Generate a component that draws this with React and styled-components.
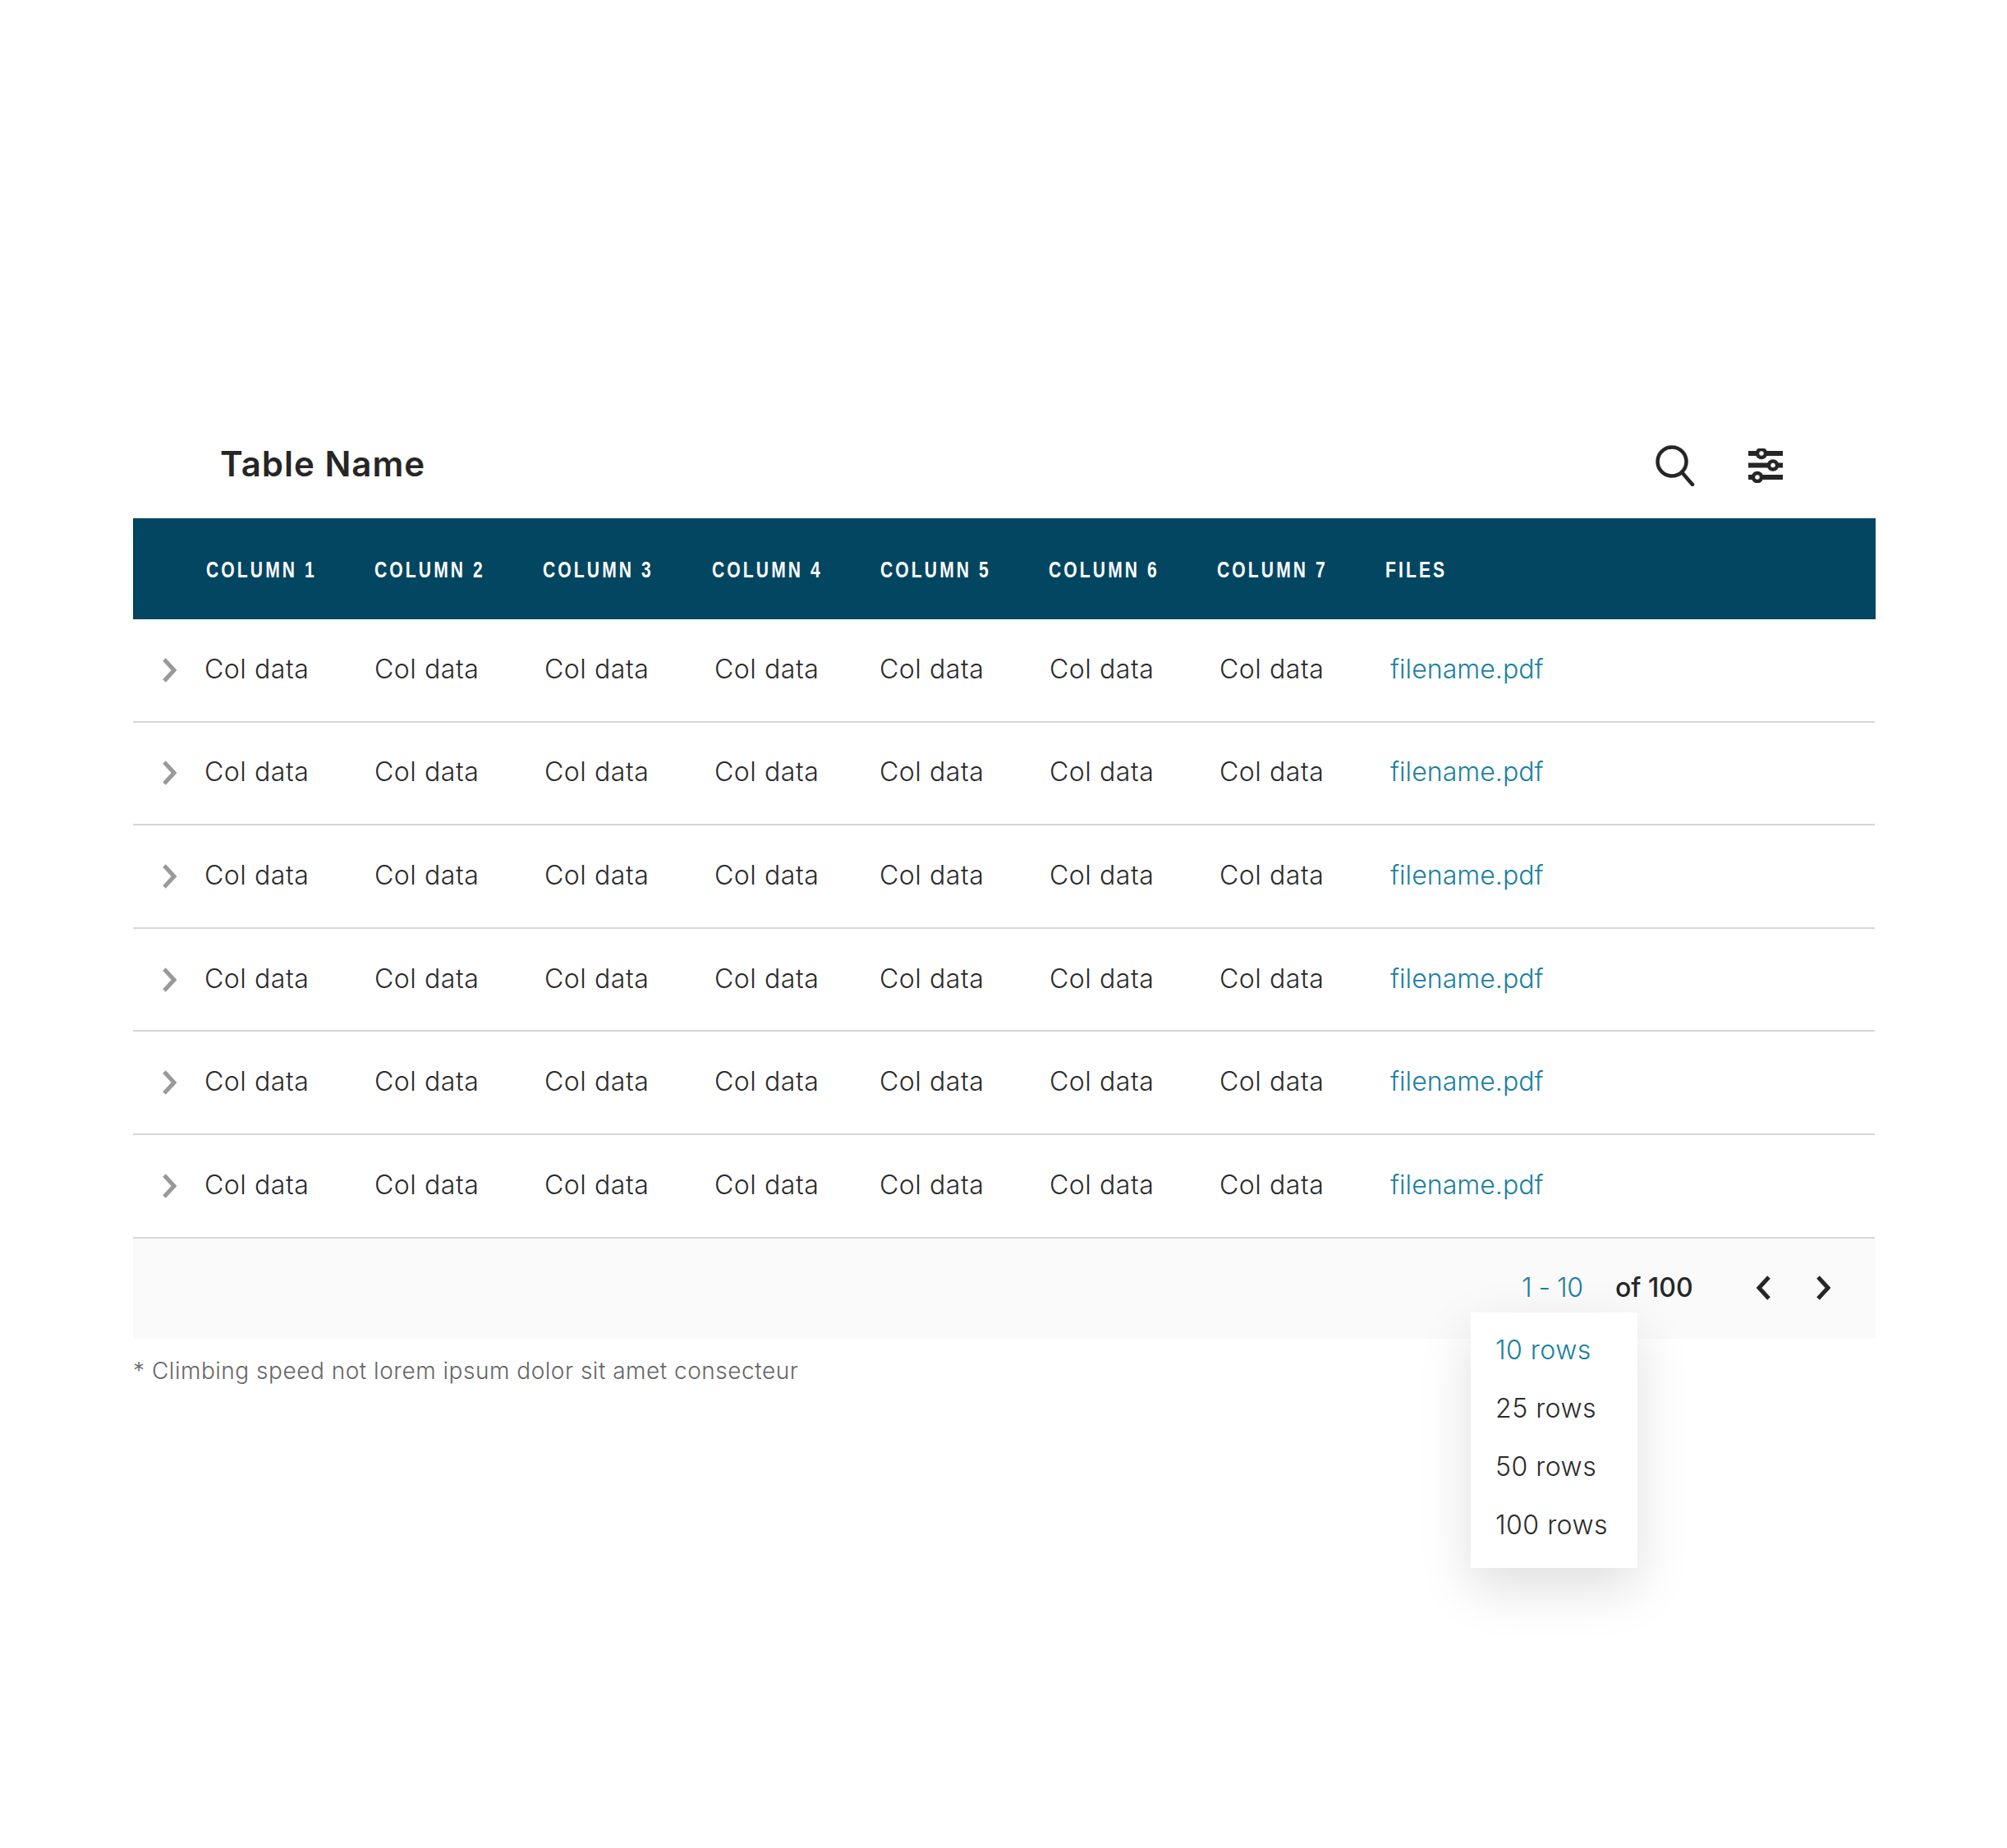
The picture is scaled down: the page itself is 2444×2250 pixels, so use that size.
import styled, { createGlobalStyle } from 'styled-components';

const COLUMNS = ['COLUMN 1', 'COLUMN 2', 'COLUMN 3', 'COLUMN 4', 'COLUMN 5', 'COLUMN 6', 'COLUMN 7', 'FILES'];
const ROWS = [1, 2, 3, 4, 5, 6];
const ROW_OPTIONS = ['10 rows', '25 rows', '50 rows', '100 rows'];

const GlobalStyle = createGlobalStyle`
  html, body {
    margin: 0;
    padding: 0;
    background: #fff;
    font-family: Inter, "Liberation Sans", sans-serif;
    color: #2b2b2b;
  }
`;

const Page = styled.div`
  width: 2444px;
  height: 2250px;
  box-sizing: border-box;
  padding: 510px 160px 0 162px;
`;

const Toolbar = styled.div`
  height: 121px;
  box-sizing: border-box;
  display: flex;
  align-items: center;
  padding: 0 113px 8px 106px;
`;

const Title = styled.h1`
  margin: 0 0 4px;
  flex: 1;
  font-size: 42px;
  font-weight: 600;
  letter-spacing: 1px;
  color: #262626;
`;

const Tools = styled.div`
  display: flex;
  align-items: center;
  gap: 65px;
`;

const Head = styled.div`
  height: 123px;
  box-sizing: border-box;
  background: #024661;
  display: grid;
  grid-template-columns: repeat(7, 205.2px) 1fr;
  align-items: center;
  padding: 4px 0 0 89px;
`;

const HeadCell = styled.div`
  font-family: "Liberation Sans", sans-serif;
  font-size: 27px;
  font-weight: 700;
  letter-spacing: 4px;
  color: #fff;
  white-space: nowrap;
  transform: scaleX(0.78);
  transform-origin: left center;
`;

const Row = styled.div`
  height: 123.6px;
  border-bottom: 2px solid #d6d6d6;
  margin-right: 1px;
  display: grid;
  grid-template-columns: 52.5px 34.5px repeat(3, 207px) 201px repeat(2, 207px) 208px 1fr;
  align-items: center;
  font-size: 32px;
  font-weight: 350;
  letter-spacing: 0.55px;
`;

const Expand = styled.div`
  grid-column: 1;
  display: flex;
  justify-content: flex-end;
`;

const FileLink = styled.a`
  color: #1a80a0;
  letter-spacing: 0.06px;
`;

const Cell = styled.div`
  white-space: nowrap;
  padding-bottom: 3px;
`;

const Pager = styled.div`
  position: relative;
  height: 122.5px;
  box-sizing: border-box;
  background: #fafafa;
  display: flex;
  align-items: center;
  padding: 0 0 2px 1691px;
  font-size: 32px;
  font-weight: 350;
`;

const Range = styled.span`
  width: 114px;
  letter-spacing: -0.5px;
  color: #1a80a0;
`;

const Total = styled.span`
  width: 172px;
  font-weight: 500;
  color: #262626;
`;

const PagerArrows = styled.div`
  display: flex;
  gap: 54px;
`;

const Menu = styled.ul`
  position: absolute;
  left: 1629px;
  top: 90.4px;
  width: 203px;
  height: 311px;
  box-sizing: border-box;
  margin: 0;
  padding: 10px 0 0 30px;
  list-style: none;
  background: #fff;
  box-shadow: 0 24px 60px rgba(0, 0, 0, 0.13);
`;

const MenuItem = styled.li`
  height: 71px;
  line-height: 71px;
  font-size: 32px;
  letter-spacing: 0.5px;
  white-space: nowrap;
  color: ${(p) => (p.$active ? '#1a80a0' : '#2b2b2b')};
`;

const Note = styled.p`
  margin: 22px 0 0;
  font-size: 28px;
  font-weight: 300;
  letter-spacing: 0.52px;
  color: #666;
`;

const SearchIcon = () => (
  <svg width="48" height="50" viewBox="0 0 48 50" fill="none" stroke="#262626" strokeWidth="4.5">
    <circle cx="20" cy="20" r="17.500" />
    <path d="M32 33 L45 48" strokeLinecap="round" />
  </svg>
);

const SlidersIcon = () => (
  <svg width="42" height="42" viewBox="0 0 42 42" fill="#fff" stroke="#262626">
    <path d="M0 6H42M0 20.500H42M0 35H42" strokeWidth="6" />
    <circle cx="16" cy="6" r="5" strokeWidth="4.500" />
    <circle cx="30" cy="20.500" r="5" strokeWidth="4.500" />
    <circle cx="11" cy="35" r="5" strokeWidth="4.500" />
  </svg>
);

const Chevron = ({ color = '#999', dir = 'right' }) => (
  <svg width="18" height="30" viewBox="0 0 18 30" fill="none" stroke={color} strokeWidth="5">
    {dir === 'right' ? <path d="M3 2 L15 15 L3 28" /> : <path d="M15 2 L3 15 L15 28" />}
  </svg>
);

const App = () => (
  <Page>
    <GlobalStyle />
    <Toolbar>
      <Title>Table Name</Title>
      <Tools>
        <SearchIcon />
        <SlidersIcon />
      </Tools>
    </Toolbar>
    <Head>
      {COLUMNS.map((c) => (
        <HeadCell key={c}>{c}</HeadCell>
      ))}
    </Head>
    {ROWS.map((r) => (
      <Row key={r}>
        <Expand>
          <Chevron />
        </Expand>
        <span />
        {COLUMNS.slice(0, 7).map((c) => (
          <Cell key={c}>Col data</Cell>
        ))}
        <Cell>
          <FileLink>filename.pdf</FileLink>
        </Cell>
      </Row>
    ))}
    <Pager>
      <Range>1 - 10</Range>
      <Total>of 100</Total>
      <PagerArrows>
        <Chevron dir="left" color="#262626" />
        <Chevron color="#262626" />
      </PagerArrows>
      <Menu>
        {ROW_OPTIONS.map((o, i) => (
          <MenuItem key={o} $active={i === 0}>
            {o}
          </MenuItem>
        ))}
      </Menu>
    </Pager>
    <Note>* Climbing speed not lorem ipsum dolor sit amet consecteur</Note>
  </Page>
);

export default App;
